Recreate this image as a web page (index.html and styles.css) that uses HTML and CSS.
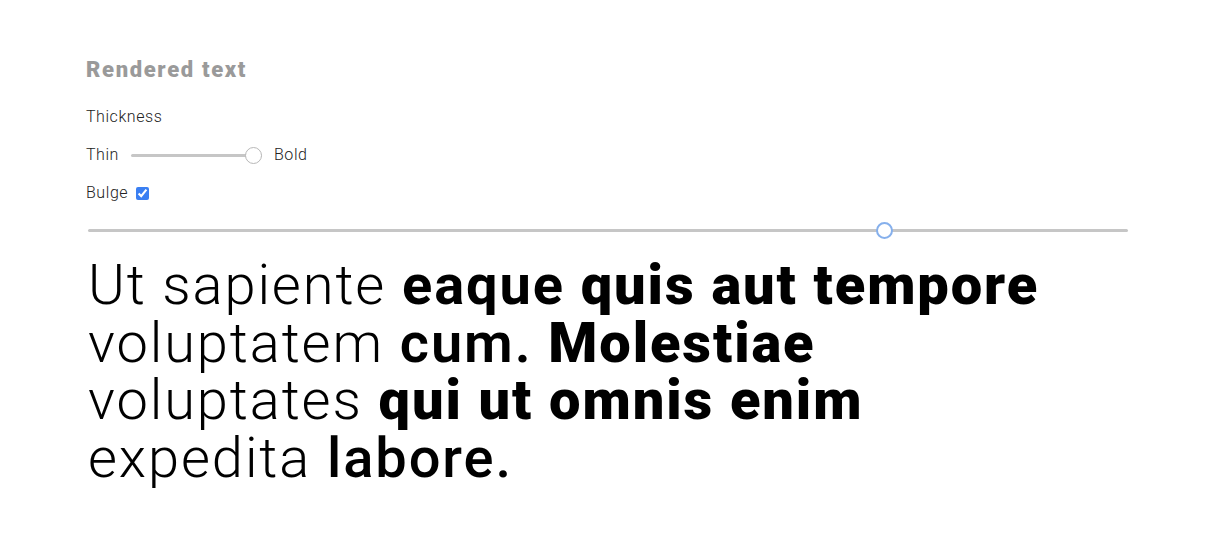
FILE: index.html
```html
<!DOCTYPE html>
<html lang="en">
<head>
<meta charset="utf-8">
<title>Rendered text</title>
<link rel="stylesheet" href="styles.css">
</head>
<body>
<main class="page">
  <h2 class="title">Rendered text</h2>
  <div class="label">Thickness</div>
  <div class="row">
    <span>Thin</span>
    <input class="range range-small" type="range" min="0" max="100" value="100">
    <span>Bold</span>
  </div>
  <label class="row">
    <span>Bulge</span>
    <input class="check" type="checkbox" checked>
  </label>
  <input class="range range-big" type="range" min="0" max="100" value="77">
  <p class="sample">
    <span class="w3">Ut sapiente</span> <span class="w7">eaque</span> <span class="w9">quis aut tempore</span><br>
    <span class="w3">voluptatem</span> <span class="w6">cum.</span> <span class="w9">Molestiae</span><br>
    <span class="w3">voluptates</span> <span class="w9">qui ut omnis enim</span><br>
    <span class="w3">expedita</span> <span class="w5">labore.</span>
  </p>
</main>
</body>
</html>
```

FILE: styles.css
```css
html, body {
  margin: 0;
  padding: 0;
  background: #ffffff;
}

body {
  font-family: "Roboto Slab", "Roboto", "DejaVu Sans", sans-serif;
  color: #222222;
}

.page {
  display: flex;
  flex-direction: column;
  align-items: flex-start;
  gap: 18px;
  padding: 57px 0 0 86px;
  width: 1042px;
}

.title {
  margin: 0 0 6px 0;
  font-size: 22px;
  line-height: 26px;
  font-weight: 900;
  letter-spacing: 0.075em;
  color: #9a9a9a;
}

.label {
  font-size: 16px;
  line-height: 20px;
  font-weight: 300;
  letter-spacing: 0.035em;
}

.row {
  display: flex;
  align-items: center;
  gap: 12px;
  height: 20px;
  font-size: 16px;
  line-height: 20px;
  font-weight: 300;
  letter-spacing: 0.035em;
}

.check {
  margin: 0 0 0 -4px;
  width: 13px;
  height: 13px;
  accent-color: #3a7ff2;
}

.range {
  -webkit-appearance: none;
  appearance: none;
  background: transparent;
  margin: 0;
  padding: 0;
  height: 18px;
}

.range-small {
  width: 131px;
}

.range-big {
  width: 1040px;
  margin-left: 2px;
}

.range::-webkit-slider-runnable-track {
  height: 3px;
  background: #c6c6c6;
  border-radius: 2px;
}

.range::-webkit-slider-thumb {
  -webkit-appearance: none;
  appearance: none;
  width: 17px;
  height: 17px;
  box-sizing: border-box;
  border-radius: 50%;
  background: #ffffff;
  border: 1px solid #b8b8b8;
  margin-top: -7px;
}

.range-big::-webkit-slider-thumb {
  border: 2.5px solid #86b0ec;
}

.sample {
  margin: 0 0 0 2px;
  font-size: 56px;
  line-height: 57.7px;
  letter-spacing: 0.034em;
  color: #000000;
}

.sample span {
  display: inline-block;
  line-height: 57.7px;
}

.w3 { font-weight: 300; }
.w5 { font-weight: 500; }
.w6 { font-weight: 600; }
.w7 { font-weight: 700; }
.w9 { font-weight: 900; }
```
